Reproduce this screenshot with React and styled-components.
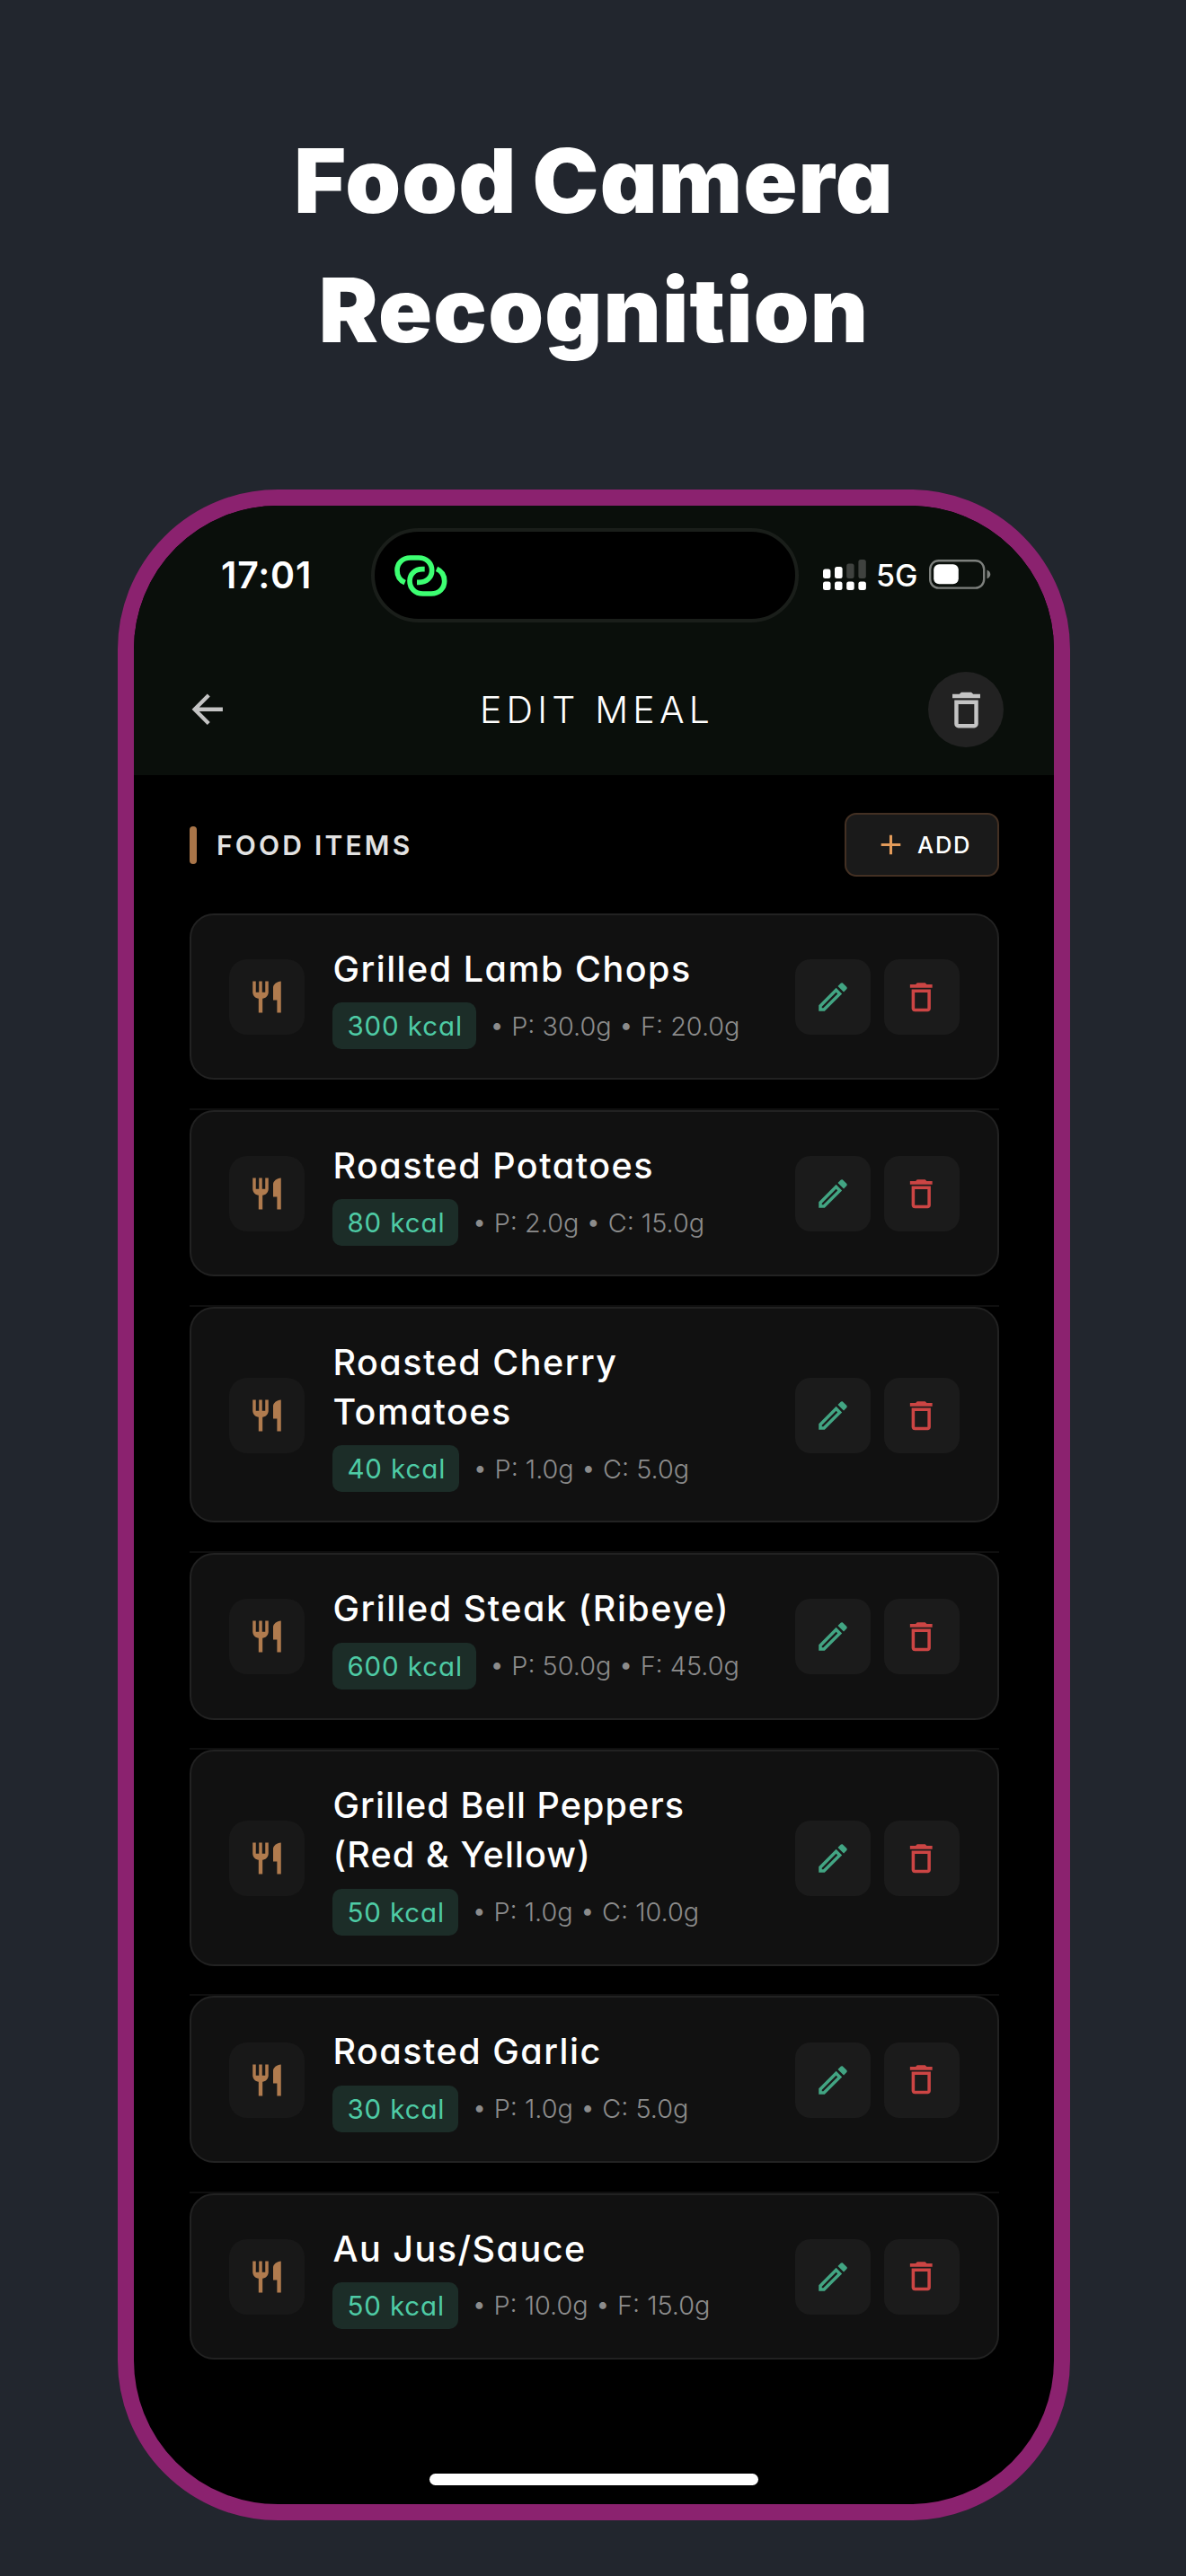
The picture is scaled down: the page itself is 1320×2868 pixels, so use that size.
import React from "react"
import styled, { createGlobalStyle } from "styled-components"
import { MdAdd, MdArrowBack, MdDeleteOutline, MdOutlineEdit, MdRestaurant } from "react-icons/md"

const theme = {
    background: "#22262e",
    frame: "#8b226f",
    header: "#0a0f0b",
    card: "#111111",
    cardBorder: "#222222",
    tile: "#1a1a1a",
    accent: "#b07b4e",
    green: "#4ecba5",
    greenBackground: "#1c2d28",
    paleText: "#8c8c8c"
}

const items = [
    { name: "Grilled Lamb Chops", kcal: 300, macros: ["P: 30.0g", "F: 20.0g"] },
    { name: "Roasted Potatoes", kcal: 80, macros: ["P: 2.0g", "C: 15.0g"] },
    { name: "Roasted Cherry\nTomatoes", kcal: 40, macros: ["P: 1.0g", "C: 5.0g"] },
    { name: "Grilled Steak (Ribeye)", kcal: 600, macros: ["P: 50.0g", "F: 45.0g"] },
    { name: "Grilled Bell Peppers\n(Red & Yellow)", kcal: 50, macros: ["P: 1.0g", "C: 10.0g"], tracking: 1.1 },
    { name: "Roasted Garlic", kcal: 30, macros: ["P: 1.0g", "C: 5.0g"] },
    { name: "Au Jus/Sauce", kcal: 50, macros: ["P: 10.0g", "F: 15.0g"] }
]

const GlobalStyle = createGlobalStyle`
    *{
        margin: 0;
        padding: 0;
        box-sizing: border-box;
    }

    body{
        background: ${theme.background};
        font-family: Inter, sans-serif;
        font-feature-settings: "cv11" 1;
        color: #ffffff;
    }

    svg{
        display: block;
        flex-shrink: 0;
    }
`

const Page = styled.div`
    width: 1320px;
    height: 2868px;
    padding: 129px 0 0 2px;
    display: flex;
    flex-direction: column;
    align-items: center;
    overflow: hidden;
`

const Headline = styled.h1`
    height: 416px;
    font-size: 99px;
    line-height: 144px;
    font-weight: 900;
    letter-spacing: 1.2px;
    word-spacing: -4px;
    text-align: center;
    white-space: pre-line;
`

const Phone = styled.div`
    width: 1060px;
    height: 2261px;
    border: 18px solid ${theme.frame};
    border-radius: 178px;
    background: #000000;
    overflow: hidden;
    display: flex;
    flex-direction: column;
`

const Header = styled.header`
    height: 300px;
    padding-top: 25px;
    background: ${theme.header};
`

const StatusBar = styled.div`
    height: 105px;
    display: grid;
    grid-template-columns: 264px 476px 1fr;
    align-items: center;
`

const Time = styled.span`
    padding: 0 0 1px 97px;
    font-size: 41px;
    font-weight: 600;
    letter-spacing: 0.8px;
`

const Island = styled.div`
    height: 105px;
    padding-left: 19px;
    display: flex;
    align-items: center;
    border: 4px solid #1a1e1a;
    border-radius: 53px;
    background: #000000;
`

const Indicators = styled.div`
    padding: 0 0 2px 27px;
    display: flex;
    align-items: center;
    gap: 11px;
`

const Network = styled.span`
    width: 48px;
    padding-top: 2px;
    font-size: 34px;
    font-weight: 500;
`

const NavBar = styled.nav`
    margin-top: 55px;
    padding: 0 56px;
    display: grid;
    grid-template-columns: 84px 1fr 84px;
    align-items: center;
`

const NavTitle = styled.h2`
    padding-left: 7px;
    font-size: 41px;
    font-weight: 300;
    letter-spacing: 5.2px;
    text-align: center;
`

const RoundButton = styled.button`
    width: 84px;
    height: 84px;
    display: flex;
    align-items: center;
    justify-content: center;
    border: none;
    border-radius: 50%;
    background: #222222;
    color: #c4c4c4;
`

const BackButton = styled(RoundButton)`
    justify-content: flex-start;
    background: none;
`

const Content = styled.main`
    flex: 1;
    padding: 42px 61px 0 62px;
`

const SectionHeader = styled.div`
    height: 71px;
    margin-bottom: 41px;
    display: flex;
    align-items: center;
    justify-content: space-between;
`

const SectionTitle = styled.h3`
    display: flex;
    align-items: center;
    gap: 22px;
    font-size: 30px;
    font-weight: 600;
    letter-spacing: 3.2px;
    color: #e2e2e2;
    &:before{
        content: "";
        width: 8px;
        height: 42px;
        border-radius: 4px;
        background: #a97549;
    }
`

const AddButton = styled.button`
    width: 172px;
    height: 71px;
    padding-left: 31px;
    display: flex;
    align-items: center;
    gap: 11px;
    border: 2px solid #433023;
    border-radius: 13px;
    background: ${theme.tile};
    font: inherit;
    font-size: 25.5px;
    font-weight: 500;
    letter-spacing: 1.8px;
    color: #ffffff;
    svg{
        color: #e39b5a;
    }
`

const List = styled.ul`
    list-style: none;
`

const ListItem = styled.li`
    & + &{
        margin-top: 31.8px;
        border-top: 2px solid #0f0f0f;
    }
`

const Card = styled.article`
    padding: 33px 42.4px 32px;
    display: flex;
    align-items: center;
    border: 2px solid ${theme.cardBorder};
    border-radius: 27px;
    background: ${theme.card};
`

const Tile = styled.div`
    width: 84px;
    height: 84px;
    flex-shrink: 0;
    display: flex;
    align-items: center;
    justify-content: center;
    border-radius: 20px;
    background: #181818;
    color: ${theme.accent};
`

const Details = styled.div`
    flex: 1;
    padding-left: 31px;
`

const Name = styled.h4`
    margin-bottom: 9.3px;
    font-size: 39.5px;
    line-height: 55px;
    font-weight: 500;
    letter-spacing: ${({ $tracking = 1.5 }) => $tracking}px;
    white-space: pre-line;
`

const Nutrition = styled.div`
    display: flex;
    align-items: center;
    gap: 15px;
`

const Kcal = styled.span`
    height: 52px;
    padding: 0 15px 0 16px;
    border-radius: 10px;
    background: ${theme.greenBackground};
    font-size: 29.5px;
    line-height: 52px;
    font-weight: 400;
    letter-spacing: 0.9px;
    color: ${theme.green};
`

const Macros = styled.span`
    font-size: 28.8px;
    font-weight: 300;
    color: ${theme.paleText};
`

const Actions = styled.div`
    display: flex;
    gap: 15px;
`

const ActionButton = styled.button`
    width: 84px;
    height: 84px;
    display: flex;
    align-items: center;
    justify-content: center;
    border: none;
    border-radius: 17px;
    background: #1b1b1b;
    color: ${({ $danger }) => $danger ? "#cc4544" : "#42a583"};
`

const HomeIndicator = styled.div`
    width: 366px;
    height: 13px;
    margin: 0 auto 21px;
    border-radius: 7px;
    background: #ffffff;
`

const link = "M44 101C28 94 18 79 18 60C18 36 36 18 62 18H90C116 18 134 36 134 61C134 84 116 100 92 100H84"

const LinkIcon = () =>
    <svg width="64.7" height="52" viewBox="0 0 194 156" fill="none" stroke="#3dff72" strokeWidth="17">
        <path d={link}/>
        <path d={link} transform="rotate(180 97 78)"/>
    </svg>

const SignalIcon = () =>
    <svg width="48" height="34" viewBox="0 0 48 34" fill="#ffffff">
        <rect x="0" y="10.5" width="8.4" height="10.5" rx="2.5"/>
        <rect x="13" y="8" width="8.6" height="13" rx="2.5"/>
        <rect x="26.2" y="4.5" width="8.4" height="16.5" rx="2.5" fill="#3f423f"/>
        <rect x="39.4" y="0" width="8.4" height="21" rx="2.5" fill="#3f423f"/>
        {[0, 13, 26.2, 39.4].map(x => <rect key={x} x={x} y="24.5" width="8.5" height="9.5" rx="2.5"/>)}
    </svg>

const BatteryIcon = () =>
    <svg width="69" height="33" viewBox="0 0 69 33">
        <rect x="1.2" y="1.2" width="60" height="30.4" rx="9.5" fill="none" stroke="#7d807d" strokeWidth="2.4"/>
        <rect x="5.2" y="5.3" width="27.6" height="22" rx="6" fill="#ffffff"/>
        <path d="M64.5 11.5C67 12.5 68.3 14.3 68.3 16.4S67 20.3 64.5 21.3Z" fill="#7d807d"/>
    </svg>

const FoodItem = ({
    name,
    kcal,
    macros,
    tracking
}) =>
    <ListItem>
        <Card>
            <Tile><MdRestaurant size={42}/></Tile>
            <Details>
                <Name $tracking={tracking}>{name}</Name>
                <Nutrition>
                    <Kcal>{kcal} kcal</Kcal>
                    <Macros>{macros.map(macro => `• ${macro}`).join(" ")}</Macros>
                </Nutrition>
            </Details>
            <Actions>
                <ActionButton aria-label="Edit"><MdOutlineEdit size={42}/></ActionButton>
                <ActionButton aria-label="Delete" $danger><MdDeleteOutline size={42.5}/></ActionButton>
            </Actions>
        </Card>
    </ListItem>

const App = () =>
    <>
        <GlobalStyle/>
        <Page>
            <Headline>{"Food Camera\nRecognition"}</Headline>
            <Phone>
                <Header>
                    <StatusBar>
                        <Time>17:01</Time>
                        <Island><LinkIcon/></Island>
                        <Indicators>
                            <SignalIcon/>
                            <Network>5G</Network>
                            <BatteryIcon/>
                        </Indicators>
                    </StatusBar>
                    <NavBar>
                        <BackButton aria-label="Back"><MdArrowBack size={51.5}/></BackButton>
                        <NavTitle>EDIT MEAL</NavTitle>
                        <RoundButton aria-label="Delete meal"><MdDeleteOutline size={53}/></RoundButton>
                    </NavBar>
                </Header>
                <Content>
                    <SectionHeader>
                        <SectionTitle>FOOD ITEMS</SectionTitle>
                        <AddButton><MdAdd size={37}/>ADD</AddButton>
                    </SectionHeader>
                    <List>
                        {items.map(item => <FoodItem key={item.name} {...item}/>)}
                    </List>
                </Content>
                <HomeIndicator/>
            </Phone>
        </Page>
    </>

export default App
